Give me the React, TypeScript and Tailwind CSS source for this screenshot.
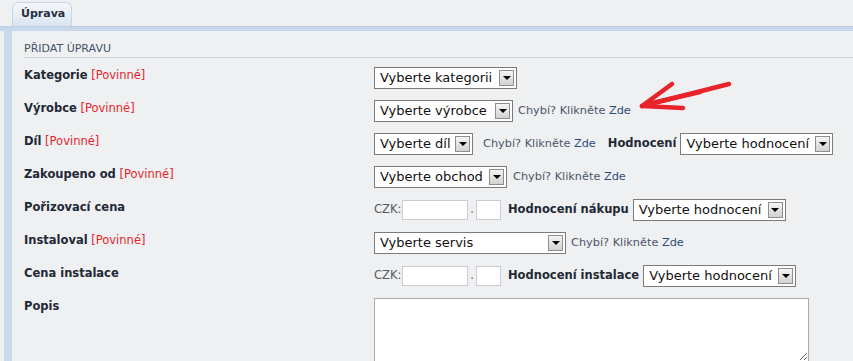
import clsx from 'clsx';

type SelectProps = {
  label: string;
  className?: string;
};

/** Old-style IE select box: white field, inset grey arrow button on the right. */
function Select({ label, className }: SelectProps) {
  return (
    <div
      className={clsx(
        'flex h-[22px] shrink-0 items-center border border-[#7b7b7b] bg-white pl-[5px] text-[13px] leading-[16px] text-[#111]',
        className
      )}
    >
      <span className="flex-1 whitespace-nowrap">{label}</span>
      <span className="mr-[2px] flex h-[16px] w-[15px] items-center justify-center border border-[#8e8e8e] bg-gradient-to-b from-[#f4f4f4] to-[#d2d2d2]">
        <span className="h-0 w-0 border-x-[4px] border-t-[4px] border-x-transparent border-t-black" />
      </span>
    </div>
  );
}

function Missing({ className }: { className?: string }) {
  return (
    <span className={clsx('whitespace-nowrap text-[11.3px] text-[#4d5668]', className)}>
      Chybí? Klikněte <span className="text-[#2c4c7c]">Zde</span>
    </span>
  );
}

function Label({ text, required }: { text: string; required?: boolean }) {
  return (
    <div className="w-[350px] shrink-0 pt-[2px] text-[11.5px] font-bold leading-[13px] text-[#222935]">
      {text}
      {required && <span className="font-normal text-[#e2262b]"> [Povinné]</span>}
    </div>
  );
}

function Price({ rating, selectClass }: { rating: string; selectClass: string }) {
  return (
    <>
      <span className="text-[11.5px] text-[#555c66]">CZK:</span>
      <span className="ml-px h-[20px] w-[66px] border border-[#c9ccd1] bg-white" />
      <span className="mx-[2px] text-[11.5px] text-[#555c66]">.</span>
      <span className="h-[20px] w-[25px] border border-[#c9ccd1] bg-white" />
      <span className="ml-[7px] whitespace-nowrap text-[11.5px] font-bold text-[#222935]">{rating}</span>
      <Select label="Vyberte hodnocení" className={selectClass} />
    </>
  );
}

export default function App() {
  return (
    <div className="relative h-[361px] w-[853px] overflow-hidden bg-[#eef0f2] font-['DejaVu_Sans',Verdana,sans-serif]">
      {/* tab strip */}
      <div className="flex h-[26px] items-end pl-[12px]">
        <div className="flex h-[24px] w-[60px] items-center rounded-t-[6px] border border-b-0 border-[#c6d6e8] bg-gradient-to-b from-[#f5f7fa] to-[#d9e5f1] pl-[8px] text-[11px] font-bold text-[#26303e]">
          Úprava
        </div>
      </div>
      <div className="h-[5px] border-t border-[#bccde0] bg-[#c9d9eb]" />

      <div className="flex">
        <div className="ml-[4px] h-[340px] w-[8px] shrink-0 bg-[#c9d9eb]" />
        <div className="flex-1 pl-[12px]">
          <div className="border-b border-[#cdd0d4] pb-[2px] pt-[11px] text-[11px] leading-[13px] text-[#465368]">
            PŘIDAT ÚPRAVU
          </div>

          <div className="mt-[9px] flex flex-col">
            <div className="flex h-[33px]">
              <Label text="Kategorie" required />
              <div className="flex h-[22px] items-center">
                <Select label="Vyberte kategorii" className="w-[143px]" />
              </div>
            </div>

            <div className="flex h-[33px]">
              <Label text="Výrobce" required />
              <div className="flex h-[22px] items-center">
                <Select label="Vyberte výrobce" className="w-[139px]" />
                <Missing className="ml-[5px]" />
              </div>
            </div>

            <div className="flex h-[33px]">
              <Label text="Díl" required />
              <div className="flex h-[22px] items-center">
                <Select label="Vyberte díl" className="w-[99px]" />
                <Missing className="ml-[10px]" />
                <span className="ml-[12px] text-[11.5px] font-bold text-[#222935]">Hodnocení</span>
                <Select label="Vyberte hodnocení" className="ml-[4px] w-[153px]" />
              </div>
            </div>

            <div className="flex h-[33px]">
              <Label text="Zakoupeno od" required />
              <div className="flex h-[22px] items-center">
                <Select label="Vyberte obchod" className="w-[133px]" />
                <Missing className="ml-[6px]" />
              </div>
            </div>

            <div className="flex h-[33px]">
              <Label text="Pořizovací cena" />
              <div className="flex h-[22px] items-center">
                <Price rating="Hodnocení nákupu" selectClass="ml-[4px] w-[153px]" />
              </div>
            </div>

            <div className="flex h-[33px]">
              <Label text="Instaloval" required />
              <div className="flex h-[22px] items-center">
                <Select label="Vyberte servis" className="w-[192px]" />
                <Missing className="ml-[5px]" />
              </div>
            </div>

            <div className="flex h-[33px]">
              <Label text="Cena instalace" />
              <div className="flex h-[22px] items-center">
                <Price rating="Hodnocení instalace" selectClass="ml-[4px] w-[153px]" />
              </div>
            </div>

            <div className="flex">
              <Label text="Popis" />
              <textarea className="h-[64px] w-[435px] border border-[#a9abae] bg-white" />
            </div>
          </div>
        </div>
      </div>

      {/* hand-drawn red annotation arrow */}
      <svg
        className="absolute left-[638px] top-[78px]"
        width="96"
        height="36"
        viewBox="0 0 96 36"
        fill="none"
        stroke="#e8232a"
        strokeWidth="4.5"
        strokeLinecap="round"
        strokeLinejoin="round"
      >
        <path d="M4 28 L91 6" />
        <path d="M6 27 L62 14" />
        <path d="M4 28 L34 6" />
        <path d="M4 28 L45 30" />
      </svg>
    </div>
  );
}
